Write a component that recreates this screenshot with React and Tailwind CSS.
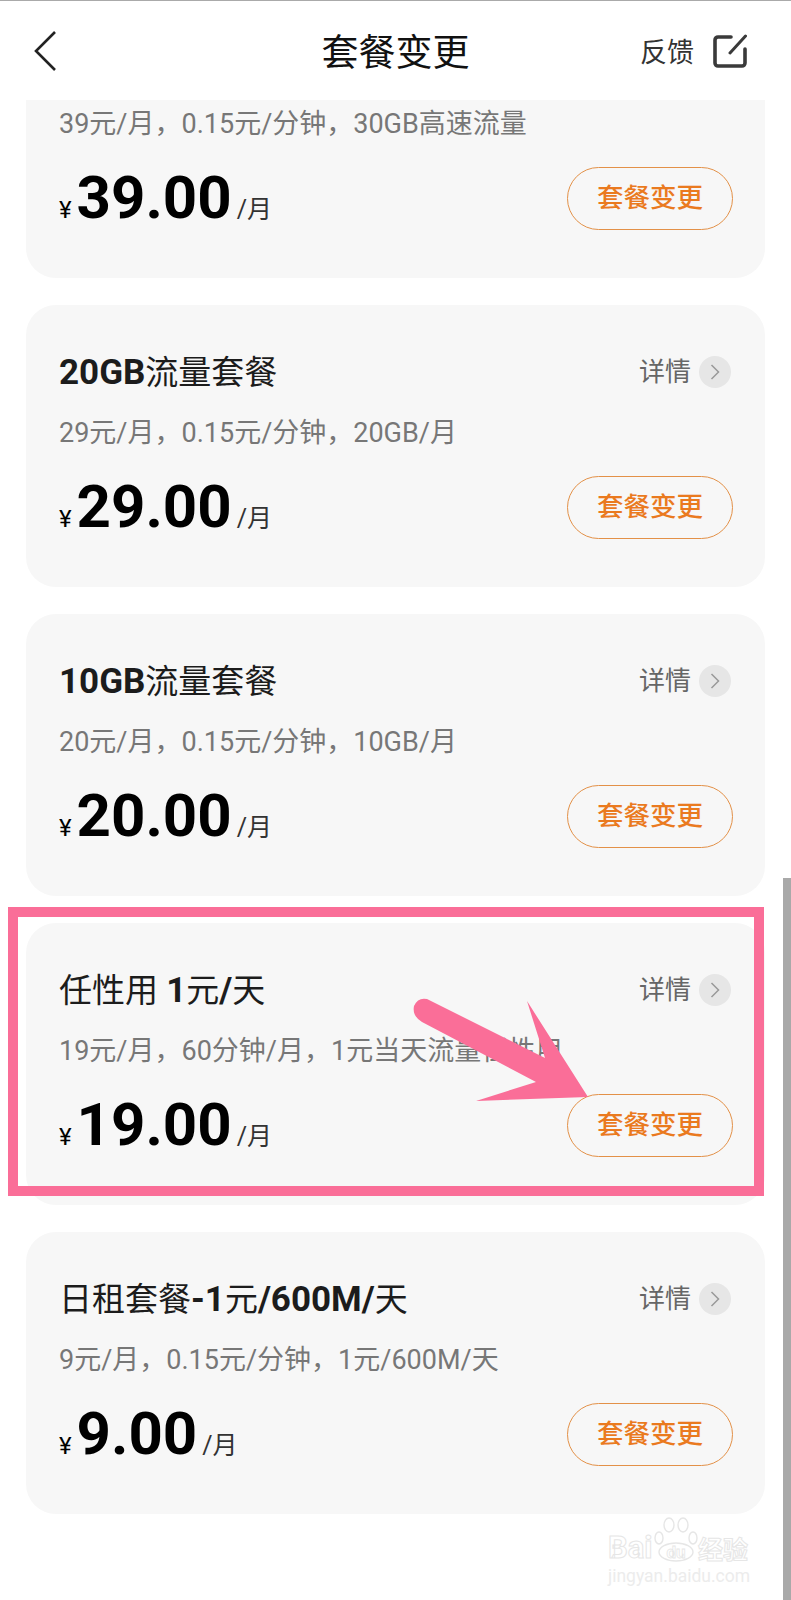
const CJK = { fontFamily: 'Roboto, "Noto Sans CJK SC", sans-serif' };

const Latin = ({ children }) => <b className="text-[35px]">{children}</b>;

// 第一张卡片被页头遮住，标题行不画
const plans = [
  { desc: '39元/月，0.15元/分钟，30GB高速流量', price: '39.00' },
  { title: <><Latin>20GB</Latin>流量套餐</>, desc: '29元/月，0.15元/分钟，20GB/月', price: '29.00' },
  { title: <><Latin>10GB</Latin>流量套餐</>, desc: '20元/月，0.15元/分钟，10GB/月', price: '20.00' },
  { title: <>任性用 <Latin>1</Latin>元<Latin>/</Latin>天</>, desc: '19元/月，60分钟/月，1元当天流量任性用', price: '19.00' },
  { title: <>日租套餐<Latin>-1</Latin>元<Latin>/600M/</Latin>天</>, desc: '9元/月，0.15元/分钟，1元/600M/天', price: '9.00' },
];

function PlanCard({ plan }) {
  return (
    <div className="h-[282px] rounded-[30px] bg-[#f7f7f7] pl-[33px] pr-[32px] pt-[45px]">
      <div className="flex h-[44px] items-center justify-between">
        {plan.title && (
          <>
            <div className="text-[33px] leading-none text-[#1c1c1c]">{plan.title}</div>
            <div className="flex items-center gap-[8px] pr-[2px]">
              <span className="text-[26px] leading-none text-[#666]">详情</span>
              <span className="flex h-[32px] w-[32px] items-center justify-center rounded-full bg-[#e6e6e6]">
                <svg width="10" height="16" viewBox="0 0 10 16" fill="none" stroke="#999" strokeWidth="1.5">
                  <path d="M1.5 1 L8.5 8 L1.5 15" />
                </svg>
              </span>
            </div>
          </>
        )}
      </div>
      <div className="mt-[21px] flex h-[36px] items-center text-[27px] leading-none text-[#777]">{plan.desc}</div>
      <div className="mt-[25px] flex h-[63px] items-center justify-between">
        <div className="flex items-baseline pb-[2px] text-black">
          <span className="text-[24px] leading-none">¥</span>
          <span className="ml-[5px] text-[60px] font-bold leading-none">{plan.price}</span>
          <span className="ml-[5px] text-[25px] leading-none text-[#333]">/月</span>
        </div>
        <button
          type="button"
          className="flex h-[63px] w-[166px] items-center justify-center rounded-full border border-[#e39148] text-[26.5px] font-medium leading-none text-[#ea7a1f]"
        >
          套餐变更
        </button>
      </div>
    </div>
  );
}

export default function App() {
  return (
    <div className="relative h-[1600px] w-[791px] overflow-hidden bg-white" style={CJK}>
      <div className="relative z-10 grid h-[100px] grid-cols-[1fr_auto_1fr] items-center border-t border-[#aaa] bg-white px-[33px]">
        <svg width="24" height="40" viewBox="0 0 24 40" fill="none" stroke="#222" strokeWidth="2.6">
          <path d="M22 1 L3 20 L22 39" />
        </svg>
        <div className="pt-[6px] text-[37px] leading-none text-[#111]">套餐变更</div>
        <div className="flex items-center justify-end gap-[19px] pr-[11px]">
          <span className="pt-[6px] text-[27px] leading-none text-[#333]">反馈</span>
          <svg width="34" height="34" viewBox="0 0 34 34" fill="none" stroke="#3a3a3a" strokeWidth="3.6" strokeLinecap="round">
            <path d="M18 3 H5 a3 3 0 0 0 -3 3 V29 a3 3 0 0 0 3 3 H29 a3 3 0 0 0 3 -3 V15" />
            <path d="M32.5 2 L17 19" strokeWidth="3" />
          </svg>
        </div>
      </div>

      <div className="h-[1500px] overflow-hidden">
        <div className="-mt-[104px] flex flex-col gap-[27px] pl-[26px] pr-[26px]">
          {plans.map((plan) => (
            <PlanCard key={plan.price} plan={plan} />
          ))}
        </div>
      </div>

      {/* scrollbar */}
      <div className="absolute right-0 top-[878px] h-[722px] w-[8px] bg-[#a9a9a9]" />

      {/* tutorial annotation */}
      <div className="absolute left-[8px] top-[907px] h-[289px] w-[756px] border-[10px] border-[#fa6e98]" />
      <svg className="absolute left-0 top-0" width="791" height="1600" fill="#fa6e98">
        <path d="M427 999 L545 1058 L527 1001 L588 1097 L476 1101 L536 1082 L422 1022 Q412 1016 414 1006 Q418 997 427 999 Z" />
      </svg>

      {/* watermark */}
      <div className="absolute left-[608px] top-[1517px] flex w-[142px] flex-col text-white">
        <div className="flex h-[46px] items-end">
          <span className="w-[46px] text-[31px] font-bold leading-none [-webkit-text-stroke:1px_#e6e6e6]">Bai</span>
          <svg width="44" height="46" viewBox="0 0 44 46" fill="none" stroke="#e6e6e6" strokeWidth="1.4">
            <ellipse cx="22" cy="35" rx="17" ry="9" />
            <ellipse cx="5" cy="21" rx="4" ry="6" />
            <ellipse cx="15" cy="8" rx="5" ry="7" />
            <ellipse cx="29" cy="8" rx="5" ry="7" />
            <ellipse cx="39" cy="21" rx="4" ry="6" />
            <text x="22" y="41" textAnchor="middle" fontSize="17" fontWeight="700" strokeWidth="0.8">du</text>
          </svg>
          <span className="text-[25px] font-bold leading-none [-webkit-text-stroke:1px_#e6e6e6]">经验</span>
        </div>
        <div className="mt-[5px] text-[17.5px] leading-none text-[#ececec]">jingyan.baidu.com</div>
      </div>
    </div>
  );
}
